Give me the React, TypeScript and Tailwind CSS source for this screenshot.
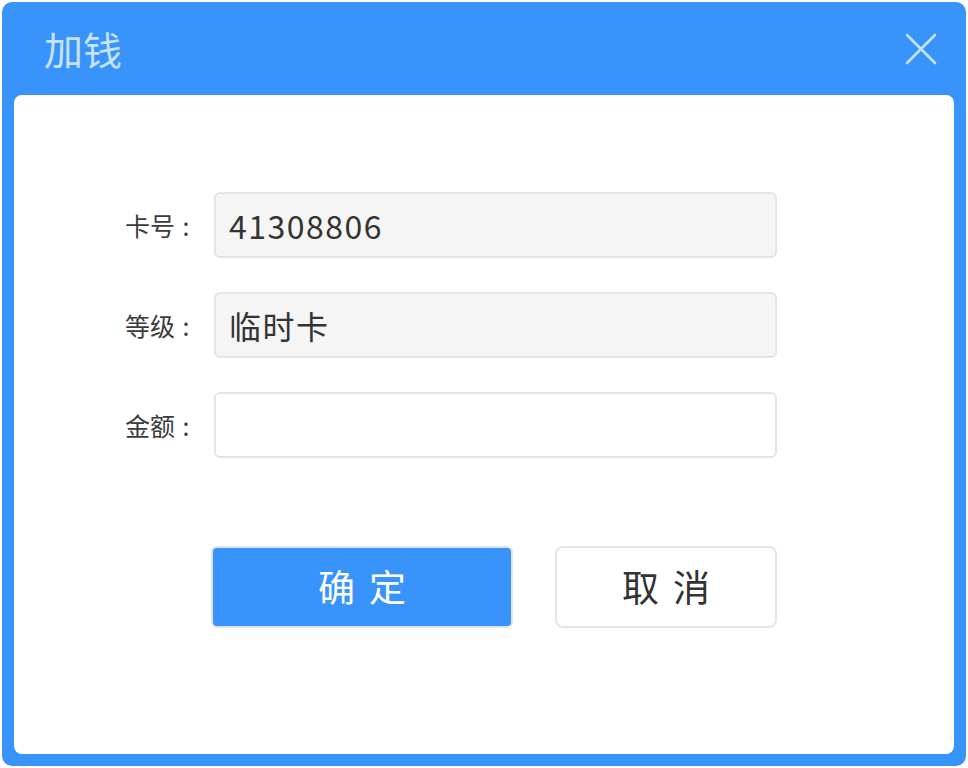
const fields = [
  { label: '卡号', value: '41308806', readOnly: true },
  { label: '等级', value: '临时卡', readOnly: true },
  { label: '金额', value: '', readOnly: false },
];

export default function App() {
  return (
    <div
      className="w-[968px] h-[768px] bg-white p-[2px]"
      style={{ fontFamily: '"Noto Sans CJK SC", "Noto Sans", sans-serif' }}
    >
      <div className="flex h-[764px] w-[964px] flex-col rounded-[10px] bg-[#3894fb]">
        {/* title bar */}
        <div className="flex h-[93px] shrink-0 items-center justify-between pl-[42px] pr-[29px]">
          <h1 className="text-[39px] leading-none text-[#c7e2fd]">加钱</h1>
          <svg width="32" height="32" viewBox="0 0 32 32" className="text-[#c7e2fd]">
            <path d="M2 2 L30 30 M30 2 L2 30" stroke="currentColor" strokeWidth="2.6" strokeLinecap="round" />
          </svg>
        </div>

        <div className="mx-[12px] mb-[12px] flex-1 rounded-[8px] bg-white pt-[97px]">
          <div className="flex flex-col gap-[34px] pl-[111px]">
            {fields.map((f) => (
              <div key={f.label} className="flex items-center gap-[15px]">
                <div className="flex w-[74px] text-[25px] leading-none text-[#3c3c3c]">
                  <span>{f.label}</span>
                  <span className="w-[22px] text-center">:</span>
                </div>
                <div
                  className={
                    f.readOnly
                      ? 'flex h-[66px] w-[563px] items-center rounded-[6px] border-2 border-[#e5e5e8] bg-[#f5f5f5] px-[13px] text-[32px] tracking-[1.5px] text-[#333]'
                      : 'flex h-[66px] w-[563px] items-center rounded-[6px] border-2 border-[#e5e5e8] bg-white px-[13px] text-[32px] text-[#333]'
                  }
                >
                  {f.value}
                </div>
              </div>
            ))}
          </div>

          <div className="mt-[88px] flex gap-[42px] pl-[197px]">
            <button className="flex h-[82px] w-[302px] items-center justify-center rounded-[6px] border-2 border-[#dfe4ec] bg-[#3894fb] pl-[14px] text-[37px] tracking-[14px] text-white">
              确定
            </button>
            <button className="flex h-[82px] w-[222px] items-center justify-center rounded-[8px] border-2 border-[#e5e5e8] bg-white pl-[14px] text-[37px] tracking-[14px] text-[#333]">
              取消
            </button>
          </div>
        </div>
      </div>
    </div>
  );
}
